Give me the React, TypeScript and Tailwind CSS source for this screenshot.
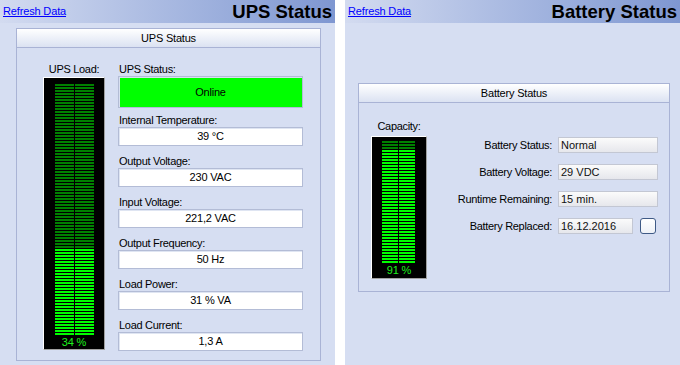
import React from "react";

const FONT = { fontFamily: '"Liberation Sans", Arial, sans-serif' };

function TopBar({ title }: { title: string }) {
  return (
    <div className="h-[23px] flex items-center justify-between pl-[3px] pr-[3px] bg-linear-to-r from-[#d3dbf0] to-[#7f97d1]">
      <a href="#" className="text-[11px] leading-[13px] tracking-[-0.15px] text-[#0000ff] underline pb-[1px]">
        Refresh Data
      </a>
      <span className="text-[18.5px] leading-[22px] font-bold text-black">{title}</span>
    </div>
  );
}

function Meter({
  rows,
  colW,
  lit,
  padT,
  padL,
  textH,
  label,
  w,
}: {
  rows: number;
  colW: number;
  lit: number;
  padT: number;
  padL: number;
  textH: number;
  label: string;
  w: number;
}) {
  return (
    <div
      className="bg-black border border-t-white border-l-white border-r-[#a0a0a0] border-b-[#a0a0a0] flex flex-col"
      style={{ width: w, paddingTop: padT, paddingLeft: padL }}
    >
      <div className="flex flex-col gap-[1px]">
        {Array.from({ length: rows }).map((_, i) => {
          const on = i >= rows - lit;
          return (
            <div key={i} className="flex gap-[1px] h-[2px]">
              <div className={on ? "h-[2px] bg-[#00ff00]" : "h-[2px] bg-[#008000]"} style={{ width: colW }} />
              <div className={on ? "h-[2px] bg-[#00ff00]" : "h-[2px] bg-[#008000]"} style={{ width: colW }} />
            </div>
          );
        })}
      </div>
      <div
        className="flex items-center justify-center text-[11px] text-[#1ef01e] tracking-[-0.2px]"
        style={{ height: textH, marginLeft: -padL }}
      >
        {label}
      </div>
    </div>
  );
}

function Field({ label, value, tall, mb }: { label: string; value: string; tall?: boolean; mb: string }) {
  return (
    <div className={"flex flex-col " + mb}>
      <div className="h-[14px] leading-[14px] text-[11px] tracking-[-0.3px] pl-[1px]">{label}</div>
      {tall ? (
        <div className="h-[32px] border border-[#b3bcd6] shadow-[inset_1px_1px_0_#d8dff0] bg-[#00ff00] flex items-center justify-center text-[11px] tracking-[-0.2px]">
          {value}
        </div>
      ) : (
        <div className="h-[19px] border border-[#b3bcd6] shadow-[inset_1px_1px_0_#dfe5f2] bg-white flex items-center justify-center text-[11px] tracking-[-0.2px]">
          {value}
        </div>
      )}
    </div>
  );
}

function BatRow({ label, value, check }: { label: string; value: string; check?: boolean }) {
  return (
    <>
      <div className="h-[16px] flex items-center justify-end text-[11px] tracking-[-0.3px]">{label}</div>
      <div className="flex items-center h-[16px]">
        <div
          className="h-[16px] border border-[#c3c7d3] bg-linear-to-b from-[#fbfbfb] to-[#e6e7ec] pl-[2px] flex items-center text-[11px] text-[#111]"
          style={{ width: check ? 75 : 100 }}
        >
          {value}
        </div>
        {check && (
          <div className="ml-[7px] w-[16px] h-[16px] rounded-[3px] border border-[#3f5a86] bg-linear-to-b from-white to-[#eef1f7]" />
        )}
      </div>
    </>
  );
}

export default function App() {
  return (
    <div className="w-[680px] h-[365px] bg-white flex gap-[10px] text-black" style={FONT}>
      {/* Left pane */}
      <div className="w-[335px] h-[365px] bg-[#d6def2] flex flex-col">
        <TopBar title="UPS Status" />
        <div className="ml-[16px] mt-[5px] w-[305px] border border-[#a9b3d5] flex flex-col">
          <div className="h-[19px] border-b border-[#a9b3d5] bg-linear-to-b from-white to-[#dbe2f2] flex items-center justify-center text-[11px] tracking-[-0.2px]">
            UPS Status
          </div>
          <div className="flex pl-[26px] pt-[14px] pb-[9px] gap-[13px]">
            <div className="w-[62px] flex flex-col items-center">
              <div className="h-[14px] leading-[14px] text-[11px] tracking-[-0.3px] mb-[1px]">UPS Load:</div>
              <Meter rows={84} colW={19} lit={29} padT={6} padL={11} textH={14} label="34 %" w={62} />
            </div>
            <div className="w-[185px] flex flex-col">
              <Field label="UPS Status:" value="Online" tall mb="mb-[5px]" />
              <Field label="Internal Temperature:" value="39 °C" mb="mb-[8px]" />
              <Field label="Output Voltage:" value="230 VAC" mb="mb-[8px]" />
              <Field label="Input Voltage:" value="221,2 VAC" mb="mb-[8px]" />
              <Field label="Output Frequency:" value="50 Hz" mb="mb-[8px]" />
              <Field label="Load Power:" value="31 % VA" mb="mb-[8px]" />
              <Field label="Load Current:" value="1,3 A" mb="mb-0" />
            </div>
          </div>
        </div>
      </div>

      {/* Right pane */}
      <div className="w-[335px] h-[365px] bg-[#d6def2] flex flex-col">
        <TopBar title="Battery Status" />
        <div className="ml-[13px] mt-[60px] w-[312px] border border-[#a9b3d5] flex flex-col">
          <div className="h-[19px] border-b border-[#a9b3d5] bg-linear-to-b from-white to-[#dbe2f2] flex items-center justify-center text-[11px] tracking-[-0.2px]">
            Battery Status
          </div>
          <div className="flex pl-[12px] pt-[16px] pb-[12px]">
            <div className="w-[56px] flex flex-col items-center">
              <div className="h-[14px] leading-[14px] text-[11px] tracking-[-0.3px] mb-[3px]">Capacity:</div>
              <Meter rows={41} colW={16} lit={38} padT={4} padL={10} textH={15} label="91 %" w={56} />
            </div>
            <div className="ml-[29px] pt-[18px] grid grid-cols-[96px_auto] gap-x-[6px] gap-y-[11px] content-start">
              <BatRow label="Battery Status:" value="Normal" />
              <BatRow label="Battery Voltage:" value="29 VDC" />
              <BatRow label="Runtime Remaining:" value="15 min." />
              <BatRow label="Battery Replaced:" value="16.12.2016" check />
            </div>
          </div>
        </div>
      </div>
    </div>
  );
}
